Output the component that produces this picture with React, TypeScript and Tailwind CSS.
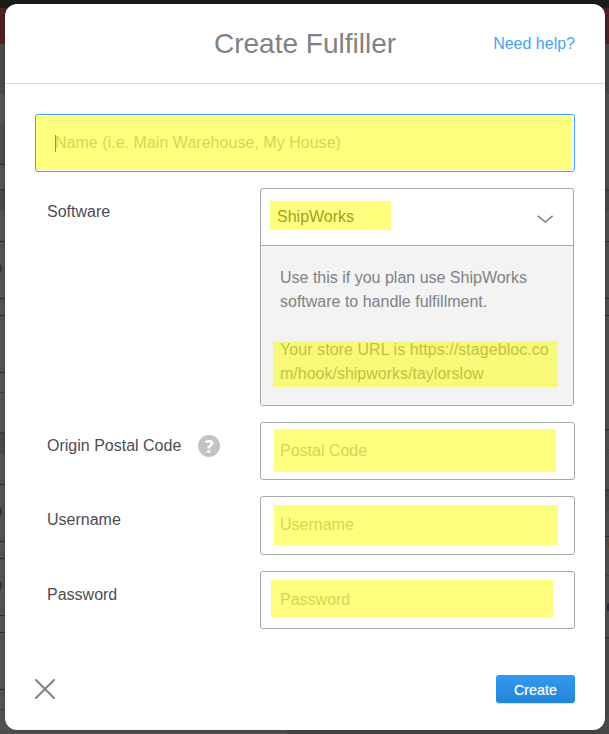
import type { ReactNode } from 'react';

interface Band {
  height: string;
  color: string;
}

// the page dimmed behind the dialog, as seen along its left and right edges
const leftBands: Band[] = [
  { height: 'h-[8px]', color: 'bg-[#1a1c1b]' },
  { height: 'h-[36px]', color: 'bg-[#502123]' },
  { height: 'h-[50px]', color: 'bg-[#4a4a4a]' },
  { height: 'h-[30px]', color: 'bg-[#545454]' },
  { height: 'h-[40px]', color: 'bg-[#4d4d4d]' },
  { height: 'h-px', color: 'bg-[#303030]' },
  { height: 'h-[24px]', color: 'bg-[#545454]' },
  { height: 'h-[2px]', color: 'bg-[#3e3e3e]' },
  { height: 'h-[20px]', color: 'bg-[#4a4a4a]' },
  { height: 'h-[30px]', color: 'bg-[#545454]' },
  { height: 'h-px', color: 'bg-[#303030]' },
  { height: 'h-[56px]', color: 'bg-[#545454]' },
  { height: 'h-px', color: 'bg-[#303030]' },
  { height: 'h-[16px]', color: 'bg-[#545454]' },
  { height: 'h-px', color: 'bg-[#303030]' },
  { height: 'h-[56px]', color: 'bg-[#545454]' },
  { height: 'h-px', color: 'bg-[#303030]' },
  { height: 'h-[19px]', color: 'bg-[#545454]' },
  { height: 'h-px', color: 'bg-[#404040]' },
  { height: 'h-[39px]', color: 'bg-[#545454]' },
  { height: 'h-[2px]', color: 'bg-[#3e3e3e]' },
  { height: 'h-[20px]', color: 'bg-[#4a4a4a]' },
  { height: 'h-[30px]', color: 'bg-[#545454]' },
  { height: 'h-px', color: 'bg-[#303030]' },
  { height: 'h-[56px]', color: 'bg-[#545454]' },
  { height: 'h-px', color: 'bg-[#303030]' },
  { height: 'h-[16px]', color: 'bg-[#545454]' },
  { height: 'h-px', color: 'bg-[#303030]' },
  { height: 'h-[56px]', color: 'bg-[#545454]' },
  { height: 'h-px', color: 'bg-[#303030]' },
  { height: 'h-[16px]', color: 'bg-[#545454]' },
  { height: 'h-px', color: 'bg-[#303030]' },
  { height: 'h-[56px]', color: 'bg-[#545454]' },
  { height: 'h-px', color: 'bg-[#303030]' },
  { height: 'h-[19px]', color: 'bg-[#545454]' },
  { height: 'h-px', color: 'bg-[#404040]' },
  { height: 'h-[24px]', color: 'bg-[#545454]' },
];

const rightBands: Band[] = [
  { height: 'h-[8px]', color: 'bg-[#1a1c1b]' },
  { height: 'h-[36px]', color: 'bg-[#502123]' },
  { height: 'h-[50px]', color: 'bg-[#454646]' },
  { height: 'h-[95px]', color: 'bg-[#4f4f4f]' },
  { height: 'h-[2px]', color: 'bg-[#3b3b3b]' },
  { height: 'h-[20px]', color: 'bg-[#474747]' },
  { height: 'h-[30px]', color: 'bg-[#4f4f4f]' },
  { height: 'h-px', color: 'bg-[#2d2d2d]' },
  { height: 'h-[56px]', color: 'bg-[#4f4f4f]' },
  { height: 'h-px', color: 'bg-[#2d2d2d]' },
  { height: 'h-[16px]', color: 'bg-[#4f4f4f]' },
  { height: 'h-px', color: 'bg-[#2d2d2d]' },
  { height: 'h-[113px]', color: 'bg-[#4f4f4f]' },
  { height: 'h-px', color: 'bg-[#2d2d2d]' },
  { height: 'h-[19px]', color: 'bg-[#4f4f4f]' },
  { height: 'h-px', color: 'bg-[#404040]' },
  { height: 'h-[39px]', color: 'bg-[#4f4f4f]' },
  { height: 'h-[2px]', color: 'bg-[#3b3b3b]' },
  { height: 'h-[20px]', color: 'bg-[#474747]' },
  { height: 'h-[25px]', color: 'bg-[#4f4f4f]' },
  { height: 'h-px', color: 'bg-[#2d2d2d]' },
  { height: 'h-[38px]', color: 'bg-[#4f4f4f]' },
  { height: 'h-px', color: 'bg-[#404040]' },
  { height: 'h-[61px]', color: 'bg-[#4f4f4f]' },
  { height: 'h-[2px]', color: 'bg-[#3b3b3b]' },
  { height: 'h-[95px]', color: 'bg-[#4a4a4a]' },
];

function EdgeBands({ bands }: { bands: Band[] }) {
  return (
    <div className="flex-1">
      {bands.map((band, i) => (
        <div key={i} className={`${band.height} ${band.color}`} />
      ))}
    </div>
  );
}

function Backdrop() {
  return (
    <div className="absolute inset-0 flex overflow-hidden">
      <EdgeBands bands={leftBands} />
      <EdgeBands bands={rightBands} />
      <div className="absolute -left-2 top-[263px] h-[11px] w-[10px] rounded-full bg-[#34343c]" />
      <div className="absolute -left-2 top-[506px] h-[11px] w-[10px] rounded-full bg-[#34343c]" />
      <div className="absolute -left-2 top-[580px] h-[11px] w-[10px] rounded-full bg-[#34343c]" />
      <div className="absolute right-0 top-[542px] h-[6px] w-px bg-[#65402b]" />
      <div className="absolute right-0 top-[603px] h-[8px] w-[2px] rounded-l bg-[#272b39]" />
      <div className="absolute bottom-0 left-0 h-[4px] w-[287px] bg-[#4e4e4e]" />
      <div className="absolute bottom-0 right-0 h-[4px] w-[322px] bg-[#464646]" />
    </div>
  );
}

// translucent marker stroke laid over a field
function Marker({ className }: { className: string }) {
  return <div className={`pointer-events-none absolute bg-[#ffff00]/50 ${className}`} />;
}

interface FieldRowProps {
  label: string;
  placeholder: string;
  boxClass: string;
  markerClass: string;
  children?: ReactNode;
}

function FieldRow({ label, placeholder, boxClass, markerClass, children }: FieldRowProps) {
  return (
    <div className="mt-4 flex items-start">
      <div className="flex w-[225px] items-center pl-3 pt-3">
        <label className="leading-6">{label}</label>
        {children}
      </div>
      <div className={`relative w-[315px] rounded-[3px] border border-[#a7a9ac] px-[19px] ${boxClass}`}>
        <input
          className="block h-full w-full outline-none placeholder:text-[#a9a9a9] placeholder:opacity-100"
          placeholder={placeholder}
        />
        <Marker className={markerClass} />
      </div>
    </div>
  );
}

function HelpIcon() {
  return (
    <span className="ml-[17px] flex h-[22px] w-[22px] items-center justify-center rounded-full bg-[#c1c4c7] pb-px font-['Open_Sans',sans-serif] text-[18px] font-bold leading-none text-white">
      ?
    </span>
  );
}

export default function App() {
  return (
    <div className="relative h-[734px] w-[609px] overflow-hidden px-[5px] py-1 font-['Liberation_Sans',Arial,sans-serif] text-base text-[#4d4d4f]">
      <Backdrop />

      <div className="relative flex h-[726px] w-[600px] flex-col rounded-[12px] bg-white shadow-[0_0_5px_rgba(0,0,0,0.2)]">
        <header className="grid h-20 grid-cols-[1fr_auto_1fr] items-center border-b border-[#d9dadb] px-[30px]">
          <h1 className="col-start-2 text-[28px] leading-8 text-[#808285]">Create Fulfiller</h1>
          <a className="justify-self-end text-[#47a3f7]">Need help?</a>
        </header>

        <main className="px-[30px] pt-[30px]">
          <div className="relative flex h-[58px] items-center rounded-[3px] border border-[#47a3f7] px-[19px]">
            <span className="h-[17px] w-px bg-[#333]" />
            <input
              className="-ml-px h-full flex-1 tracking-[0.03px] outline-none placeholder:text-[#a9a9a9] placeholder:opacity-100"
              placeholder="Name (i.e. Main Warehouse, My House)"
            />
            <Marker className="bottom-px left-0 right-[3px] top-px" />
          </div>

          <div className="mt-4 flex items-start">
            <label className="w-[225px] pl-3 pt-3 leading-6">Software</label>
            <div className="w-[314px] rounded-[3px] border border-[#a7a9ac]">
              <div className="relative flex h-[57px] items-center justify-between border-b border-[#a7a9ac] pl-4 pr-5">
                <span className="-mt-px text-[#3c3c3e]">ShipWorks</span>
                <svg className="mt-[3px] h-2 w-4" viewBox="0 0 16 8" fill="none" stroke="#808285" strokeWidth="1.6">
                  <path d="M.8 .8 8.3 7 15.6 .8" />
                </svg>
                <Marker className="left-[9px] top-[12px] h-[29px] w-[121px]" />
              </div>
              <div className="relative h-[159px] rounded-b-[2px] bg-[#f3f3f3] px-[19px] pt-5 leading-6 text-[#808285]">
                <p>
                  Use this if you plan use ShipWorks
                  <br />
                  software to handle fulfillment.
                </p>
                <p className="mt-6 w-[274px] break-all">
                  <span className="tracking-[0.06px]">Your store URL is https://stagebloc.co</span>
                  <span>m/hook/shipworks/taylorslow</span>
                </p>
                <Marker className="left-[12px] top-[95px] h-[46px] w-[285px]" />
              </div>
            </div>
          </div>

          <FieldRow
            label="Origin Postal Code"
            placeholder="Postal Code"
            boxClass="h-[58px]"
            markerClass="left-[13px] top-[6px] h-[43px] w-[282px]"
          >
            <HelpIcon />
          </FieldRow>
          <FieldRow
            label="Username"
            placeholder="Username"
            boxClass="h-[59px] pb-[2px]"
            markerClass="left-[13px] top-[8px] h-[40px] w-[284px]"
          />
          <FieldRow
            label="Password"
            placeholder="Password"
            boxClass="h-[58px]"
            markerClass="left-[10px] top-[8px] h-[38px] w-[282px]"
          />
        </main>

        <footer className="mt-auto flex items-center justify-between px-[30px] pb-[27px]">
          <button aria-label="Close">
            <svg className="h-5 w-5" viewBox="0 0 20 20" fill="none" stroke="#808285" strokeWidth="2" strokeLinecap="round">
              <path d="M1 1 19 19M19 1 1 19" />
            </svg>
          </button>
          <button className="h-[28px] w-[79px] rounded-[3px] bg-gradient-to-b from-[#3498ee] to-[#2385da] pt-px text-[14.4px] leading-5 text-white shadow-[0_1px_1px_rgba(0,0,0,0.15)] [text-shadow:0_0_1px_rgba(255,255,255,0.5)]">
            Create
          </button>
        </footer>
      </div>
    </div>
  );
}
